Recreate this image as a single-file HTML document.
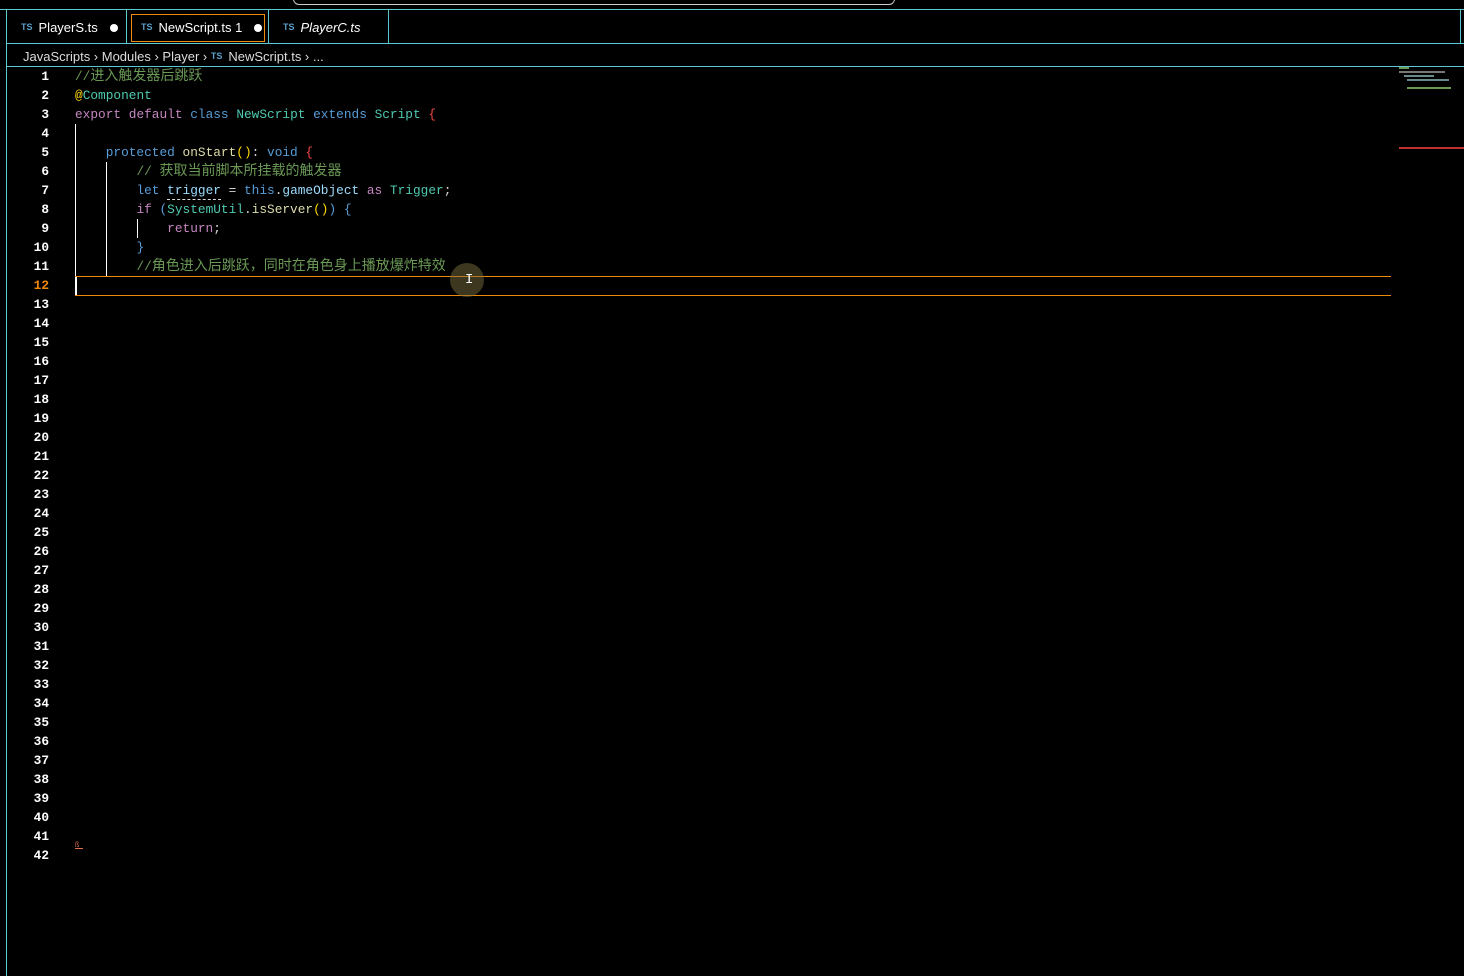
<!DOCTYPE html>
<html><head><meta charset="utf-8"><style>
body{margin:0;width:1464px;height:976px;background:#000;overflow:hidden;position:relative;font-family:"Liberation Sans","Noto Sans CJK SC",sans-serif;color:#ddd}
.ab{position:absolute}
.bd{background:#5bc8d0}
.tab{position:absolute;top:12px;height:30px;font-size:13px;line-height:30px;color:#fff;white-space:nowrap}
.ts{font-size:9px;font-weight:bold;color:#5a9fc9;margin-right:6px;vertical-align:2px}
.dot{display:inline-block;width:8px;height:8px;border-radius:50%;background:#fff;margin-left:12px;vertical-align:0}
.code{position:absolute;left:75px;top:67px;font-family:"Liberation Mono","Noto Sans CJK SC",monospace;font-size:12.8px;line-height:19px;white-space:pre;color:#d4d4d4}
.code div{height:19px;overflow:visible}
.code .z{font-size:14px;font-family:"Noto Sans CJK SC",sans-serif;line-height:1}
.ln{position:absolute;left:10px;top:67px;width:39px;text-align:right;font-family:"Liberation Mono",monospace;font-size:12.8px;font-weight:bold;line-height:19px;color:#fff;white-space:pre}
.c{color:#6a9955}.k{color:#c586c0}.b{color:#569cd6}.t{color:#4ec9b0}.f{color:#dcdcaa}.v{color:#9cdcfe}.r{color:#f44747}.y{color:#ffd700}
</style></head><body>
<div class="ab" style="left:293px;top:-8px;width:600px;height:11px;border:1px solid #ccc;border-radius:6px"></div>
<div class="ab bd" style="left:0;top:9px;width:1464px;height:1px"></div>
<div class="ab bd" style="left:6px;top:9px;width:1px;height:967px"></div>
<div class="ab bd" style="left:6px;top:43px;width:1458px;height:1px"></div>
<div class="ab bd" style="left:6px;top:66px;width:1458px;height:1px"></div>
<div class="ab bd" style="left:126px;top:9px;width:1px;height:34px"></div>
<div class="ab bd" style="left:268px;top:9px;width:1px;height:34px"></div>
<div class="ab bd" style="left:388px;top:9px;width:1px;height:34px"></div>
<div class="ab bd" style="left:1460px;top:9px;width:1px;height:34px"></div>
<div class="ab" style="left:131px;top:14px;width:132px;height:26px;border:1px solid #f0880a"></div>
<div class="tab" style="left:21px"><span class="ts">TS</span>PlayerS.ts<span class="dot"></span></div>
<div class="tab" style="left:141px"><span class="ts">TS</span>NewScript.ts 1<span class="dot"></span></div>
<div class="tab" style="left:283px;font-style:italic"><span class="ts" style="font-style:normal">TS</span>PlayerC.ts</div>
<div class="ab" style="left:23px;top:47px;font-size:13px;line-height:18px;color:#ddd;white-space:nowrap">JavaScripts › Modules › Player › <span class="ts">TS</span>NewScript.ts › ...</div>
<div class="ln">1
2
3
4
5
6
7
8
9
10
11
<span style="color:#f0880a">12</span>
13
14
15
16
17
18
19
20
21
22
23
24
25
26
27
28
29
30
31
32
33
34
35
36
37
38
39
40
41
42</div>
<div class="ab" style="left:75px;top:124px;width:1px;height:152px;background:#fff"></div>
<div class="ab" style="left:106px;top:162px;width:1px;height:114px;background:#fff"></div>
<div class="ab" style="left:137px;top:219px;width:1px;height:19px;background:#fff"></div>
<div class="ab" style="left:75px;top:276px;width:1316px;height:18px;border-top:1px solid #f0880a;border-bottom:1px solid #f0880a"></div>
<div class="ab" style="left:75px;top:277px;width:2px;height:18px;background:#fff"></div>
<div class="ab" style="left:167px;top:199px;width:54px;border-top:1px dashed #ddd"></div>
<div class="ab" style="left:450px;top:263px;width:34px;height:34px;border-radius:50%;background:rgba(120,110,60,.5)"></div>
<div class="ab" style="left:465px;top:272px;font-size:14px;color:#fff;font-family:'Liberation Mono',monospace">I</div>
<div class="code"><div><span class="c">//<span class="z">进入触发器后跳跃</span></span></div><div><span class="y">@</span><span class="t">Component</span></div><div><span class="k">export</span> <span class="k">default</span> <span class="b">class</span> <span class="t">NewScript</span> <span class="b">extends</span> <span class="t">Script</span> <span class="r">{</span></div><div> </div><div>    <span class="b">protected</span> <span class="f">onStart</span><span class="y">()</span>: <span class="b">void</span> <span class="r">{</span></div><div>        <span class="c">// <span class="z">获取当前脚本所挂载的触发器</span></span></div><div>        <span class="b">let</span> <span class="v">trigger</span> = <span class="b">this</span>.<span class="v">gameObject</span> <span class="k">as</span> <span class="t">Trigger</span>;</div><div>        <span class="k">if</span> <span class="b">(</span><span class="t">SystemUtil</span>.<span class="f">isServer</span><span class="y">()</span><span class="b">)</span> <span class="b">{</span></div><div>            <span class="k">return</span>;</div><div>        <span class="b">}</span></div><div>        <span class="c">//<span class="z">角色进入后跳跃，同时在角色身上播放爆炸特效</span></span></div></div>
<div class="ab" style="left:75px;top:842px;width:8px;height:6px;border-bottom:1px solid #e07050;color:#e07050;font-size:7px">ß</div>
<div class="ab" style="left:1399px;top:67px;width:10px;height:2px;background:#6a9955"></div>
<div class="ab" style="left:1399px;top:71px;width:46px;height:2px;background:#777"></div>
<div class="ab" style="left:1404px;top:75px;width:30px;height:2px;background:#6a8a8a"></div>
<div class="ab" style="left:1407px;top:79px;width:42px;height:2px;background:#6a8a8a"></div>
<div class="ab" style="left:1407px;top:87px;width:44px;height:2px;background:#6a9955"></div>
<div class="ab" style="left:1399px;top:147px;width:65px;height:2px;background:#c03030"></div>
</body></html>
